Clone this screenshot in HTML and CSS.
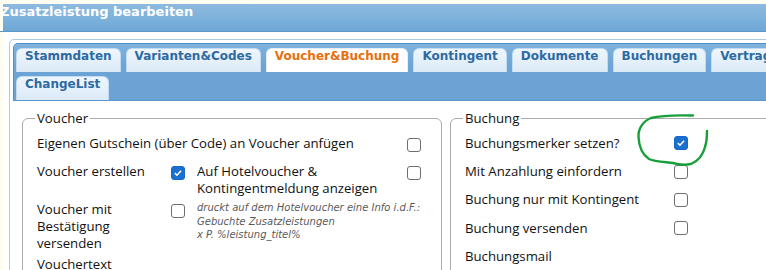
FILE: index.html
```html
<!DOCTYPE html>
<html lang="de">
<head>
  <meta charset="UTF-8" />
  <title>Zusatzleistung bearbeiten</title>
  <link rel="stylesheet" href="styles.css">
</head>
<body>
  <div class="window">
    <div class="titlebar">Zusatzleistung bearbeiten</div>
    <div class="tabs">
      <ul class="tab-nav">
        <li class="tab">Stammdaten</li>
        <li class="tab">Varianten&amp;Codes</li>
        <li class="tab active">Voucher&amp;Buchung</li>
        <li class="tab">Kontingent</li>
        <li class="tab">Dokumente</li>
        <li class="tab">Buchungen</li>
        <li class="tab">Vertrag</li>
        <li class="tab">ChangeList</li>
      </ul>
      <div class="tab-panel">
        <fieldset class="box voucher">
          <legend>Voucher</legend>
          <div class="vgrid">
            <div class="lbl span3 first">Eigenen Gutschein (über Code) an Voucher anfügen</div>
            <span class="cb first"></span>

            <div class="lbl">Voucher erstellen</div>
            <span class="cb checked"></span>
            <div class="lbl">Auf Hotelvoucher &amp; Kontingentmeldung anzeigen</div>
            <span class="cb"></span>

            <div class="lbl">Voucher mit Bestätigung versenden</div>
            <span class="cb"></span>
            <div class="hint span2">druckt auf dem Hotelvoucher eine Info i.d.F.:<br>Gebuchte Zusatzleistungen<br>x P. %leistung_titel%</div>

            <div class="lbl span4">Vouchertext</div>
          </div>
        </fieldset>

        <fieldset class="box buchung">
          <legend>Buchung</legend>
          <div class="bgrid">
            <div class="lbl">Buchungsmerker setzen?</div>
            <span class="cb checked"></span>
            <div class="lbl">Mit Anzahlung einfordern</div>
            <span class="cb"></span>
            <div class="lbl">Buchung nur mit Kontingent</div>
            <span class="cb"></span>
            <div class="lbl">Buchung versenden</div>
            <span class="cb"></span>
            <div class="lbl">Buchungsmail</div>
            <span></span>
          </div>
          <div class="mailbox"></div>
          <!-- hand drawn marker from the screenshot -->
          <svg class="marker" width="90" height="64" viewBox="0 0 90 64">
            <path d="M62,6.5 C45,6 28,7 20,9 C12,12 7,20 7.5,28 C8,38 12,46 18,50 C24,53 35,53 42,54 C48,56 55,56 60,55 C67,52 72,46 74,38 C76,32 76,27 76,22" fill="none" stroke="#17a03a" stroke-width="2.4" stroke-linecap="round"/>
          </svg>
        </fieldset>
      </div>
    </div>
  </div>
</body>
</html>
```

FILE: styles.css
```css
body {
  margin: 0;
  background: #fffdf0;
  overflow: hidden;
  font-family: "Open Sans", "Liberation Sans", sans-serif;
}

.window {
  margin: 4px 0 0 3px;
  width: 840px;
  height: 300px;
  background: #fff;
}

.titlebar {
  height: 27px;
  line-height: 27px;
  margin-left: -3px;
  color: #fff;
  font: bold 13px "DejaVu Sans", Verdana, sans-serif;
  background: linear-gradient(#8dbadf, #7cb1db 55%, #6ea6d5);
  border-bottom: 1px solid #5c98cc;
  box-shadow: inset 3px 0 0 #fffdf0;
}

.tabs {
  margin: 7px 0 0 6px;
  border: 1px solid #a9cbe9;
  border-radius: 5px;
  padding: 3px;
}

.tab-nav {
  list-style: none;
  margin: 0;
  padding: 4px 0 0 2px;
  display: flex;
  flex-wrap: wrap;
  gap: 4px 5px;
  background: linear-gradient(#80b3de, #6ba4d5 40%, #6aa3d4);
  border: 1px solid #4f90cb;
  border-bottom-color: #5b97cc;
  border-radius: 5px 5px 0 0;
  width: 800px;
}

.tab {
  height: 23px;
  line-height: 24px;
  padding: 0 8px;
  font: bold 12px "DejaVu Sans", Verdana, sans-serif;
  color: #2d6aa3;
  background: linear-gradient(#eef6fd, #dbeaf7);
  border: 1px solid #c3dbf0;
  border-bottom: none;
  border-radius: 6px 6px 0 0;
}

.tab.active {
  background: #fff;
  color: #e6700c;
  border-color: #e4eef8;
}

.tab-panel {
  display: flex;
  gap: 8px;
  padding: 9px 0 0 9px;
}

.box {
  margin: 0;
  border: 1px solid #ababab;
  border-radius: 6px;
  padding: 4px 14px 0;
  font-size: 13.2px;
  color: #111;
}

.box legend {
  padding: 0 2px;
  margin-left: -2px;
  line-height: 17px;
}

.voucher {
  width: 390px;
  height: 160px;
}

.buchung {
  width: 320px;
  height: 160px;
  position: relative;
}

.lbl {
  line-height: 17px;
}

.vgrid {
  display: grid;
  grid-template-columns: 122px 14px 198px 14px;
  column-gap: 12px;
  row-gap: 4px;
  align-items: start;
}

.vgrid .first {
  margin-top: 4px;
  margin-bottom: 7px;
}

.vgrid .cb {
  margin-top: 3px;
}

.vgrid .cb.first {
  margin-top: 7px;
}

.span2 { grid-column: span 2; }
.span3 { grid-column: span 3; }
.span4 { grid-column: span 4; }

.hint {
  font: italic 10px/13.5px "DejaVu Sans", Verdana, sans-serif;
  color: #5a5a5a;
  margin-top: 0;
}

.bgrid {
  display: grid;
  grid-template-columns: 195px 14px;
  column-gap: 14px;
  grid-auto-rows: 28.4px;
  align-items: center;
  margin-top: -2px;
}

.cb {
  display: block;
  box-sizing: border-box;
  width: 14px;
  height: 14px;
  border: 1px solid #6e6e6e;
  border-radius: 3px;
  background: #fff;
}

.cb.checked {
  border-color: #1568c7;
  background: #1a6fcf url("data:image/svg+xml,%3Csvg xmlns='http://www.w3.org/2000/svg' viewBox='0 0 14 14'%3E%3Cpath d='M3.3 7.2 L5.8 9.6 L10.6 4.4' fill='none' stroke='white' stroke-width='1.8'/%3E%3C/svg%3E") center/100% no-repeat;
}

.mailbox {
  margin-top: 2px;
  height: 20px;
  border: 1px solid #7f90b0;
  border-radius: 2px;
}

.marker {
  position: absolute;
  left: 180px;
  top: -18px;
}
```
